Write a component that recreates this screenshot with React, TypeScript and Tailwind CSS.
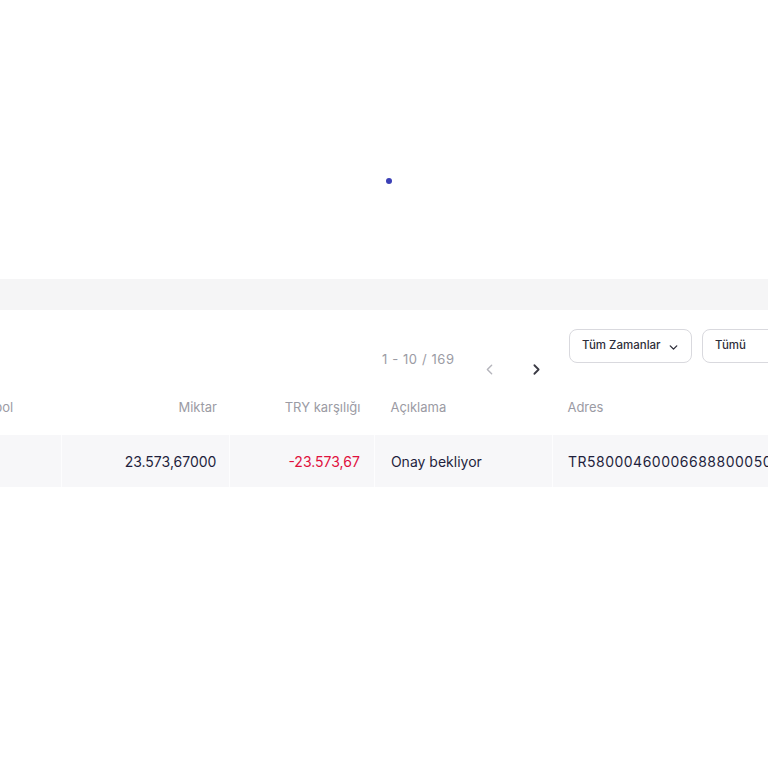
import { ChevronDown, ChevronLeft, ChevronRight } from "lucide-react";

const font = { fontFamily: "Inter, 'Noto Sans', sans-serif" };

export default function App() {
  return (
    <div className="w-[768px] h-[768px] overflow-hidden bg-white" style={font}>
      {/* loading area */}
      <div className="h-[279px] pl-[386px] pt-[178px]">
        <div className="w-[6px] h-[6px] rounded-full bg-[#3b3fb6]" />
      </div>
      <div className="h-[31px] bg-[#f5f5f6]" />

      <div className="ml-[-48px] w-[900px]">
        {/* toolbar */}
        <div className="flex items-start h-[70px] pt-[19px]">
          <div className="ml-[430px] w-[86px] mt-[24px] text-[13px] text-[#9b9ba4] leading-none tracking-[0.6px] whitespace-nowrap">
            1 - 10 / 169
          </div>
          <div className="ml-[13px] mt-[32px] flex items-center gap-[30px]">
            <ChevronLeft className="w-[17px] h-[17px] text-[#b5b5bc]" strokeWidth={2} />
            <ChevronRight className="w-[17px] h-[17px] text-[#3a3a44]" strokeWidth={2.5} />
          </div>
          <div className="ml-[24px] flex gap-[10px]">
            <div className="w-[123px] h-[34px] rounded-lg border border-[#d9d9de] flex items-center pl-[12px] pr-[11px] justify-between">
              <span className="text-[11.5px] font-medium text-[#2e2e3a]">Tüm Zamanlar</span>
              <ChevronDown className="w-[13px] h-[13px] text-[#2e2e3a] mt-[3px]" strokeWidth={2.5} />
            </div>
            <div className="w-[124px] h-[34px] rounded-lg border border-[#d9d9de] flex items-center pl-[12px]">
              <span className="text-[11.5px] font-medium text-[#2e2e3a]">Tümü</span>
            </div>
          </div>
        </div>

        {/* table */}
        <table className="border-collapse text-[14px]">
          <thead>
            <tr className="h-[55px] text-[13px] text-[#9b9ba4]">
              <th className="w-[110px] font-normal text-left pl-[15px]">Sembol</th>
              <th className="w-[169px] font-normal text-right pr-[13px]">Miktar</th>
              <th className="w-[145px] font-normal text-right pr-[14px]">TRY karşılığı</th>
              <th className="w-[179px] font-normal text-left pl-[16px]">Açıklama</th>
              <th className="w-[300px] font-normal text-left pl-[15px]">Adres</th>
            </tr>
          </thead>
          <tbody>
            <tr className="h-[52px] bg-[#f7f7f9] text-[#1f1f3d]">
              <td className="border-r border-[#fdfdfe] pl-[15px]"></td>
              <td className="border-r border-[#fdfdfe] text-right pr-[13px]">23.573,67000</td>
              <td className="border-r border-[#fdfdfe] text-right pr-[14px] text-[#e0103c]">-23.573,67</td>
              <td className="border-r border-[#fdfdfe] pl-[16px]">Onay bekliyor</td>
              <td className="pl-[15px] whitespace-nowrap tracking-[0.5px]">TR580004600066888000500001</td>
            </tr>
          </tbody>
        </table>
      </div>
    </div>
  );
}
